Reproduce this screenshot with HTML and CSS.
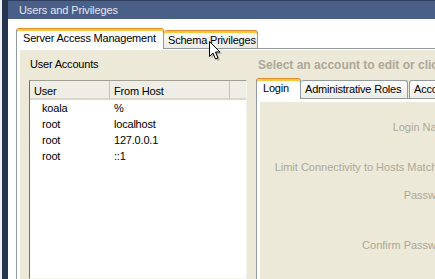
FILE: index.html
```html
<!DOCTYPE html>
<html>
<head>
<meta charset="utf-8">
<link rel="stylesheet" href="styles.css">
</head>
<body>
<div class="window">
  <div class="edge"></div>
  <div class="main">
    <div class="titlebar">Users and Privileges</div>
    <div class="client">
      <div class="tabs">
        <div class="tab active">Server Access Management</div>
        <div class="tab hover">Schema Privileges</div>
      </div>
      <div class="panel">
        <div class="panel-inner">
          <div class="col-left">
            <div class="section-label">User Accounts</div>
            <div class="listview">
              <div class="lv-head">
                <div class="hc c1">User</div>
                <div class="hc c2">From Host</div>
                <div class="hc c3"></div>
              </div>
              <div class="lv-row"><span class="c1">koala</span><span class="c2">%</span></div>
              <div class="lv-row"><span class="c1">root</span><span class="c2">localhost</span></div>
              <div class="lv-row"><span class="c1">root</span><span class="c2">127.0.0.1</span></div>
              <div class="lv-row"><span class="c1">root</span><span class="c2">::1</span></div>
            </div>
          </div>
          <div class="col-right">
            <div class="hint">Select an account to edit or click Add Account to create a new one</div>
            <div class="subtabs">
              <div class="stab active">Login</div>
              <div class="stab">Administrative Roles</div>
              <div class="stab">Account Limits</div>
            </div>
            <div class="subpanel">
              <div class="form">
                <div class="field f1"><span class="lbl">Login Name:</span></div>
                <div class="field f2"><span class="lbl">Limit Connectivity to Hosts Matching:</span></div>
                <div class="field f3"><span class="lbl">Password:</span></div>
                <div class="field f4"><span class="lbl">Confirm Password:</span></div>
              </div>
            </div>
          </div>
        </div>
      </div>
    </div>
  </div>
</div>
<svg class="cursor" width="14" height="22" viewBox="0 0 14 22">
  <path d="M2.5 2.5 L2.5 17.5 L6 14 L8.5 20 L11 19 L8.5 13 L13 13 Z" fill="#000" opacity="0.25"/>
  <path d="M0.5 0.5 L0.5 15.5 L4 12 L6.5 18 L9 17 L6.5 11 L11 11 Z" fill="#fff" stroke="#000" stroke-width="1" stroke-linejoin="miter"/>
</svg>
</body>
</html>
```
FILE: styles.css
```css
html, body {
  margin: 0;
  padding: 0;
}
body {
  width: 435px;
  height: 279px;
  overflow: hidden;
  background: #fff;
  font-family: "Liberation Sans", Arial, sans-serif;
  font-size: 11px;
  letter-spacing: -0.2px;
  color: #000;
}
.window {
  display: flex;
  width: 435px;
  height: 279px;
}
.edge {
  flex: none;
  width: 8px;
  background: linear-gradient(to right, #efeff4 0, #efeff4 2px, #25354f 2px);
}
.main {
  flex: 1;
  min-width: 0;
  display: flex;
  flex-direction: column;
}
.titlebar {
  flex: none;
  box-sizing: border-box;
  height: 19px;
  border-top: 1px solid #2f3f60;
  background: #4a5f87;
  color: #e4e8f0;
  padding-left: 11px;
  line-height: 18px;
  font-size: 11px;
  letter-spacing: -0.1px;
}
.client {
  flex: 1;
  display: flex;
  flex-direction: column;
  background: #fff;
  padding: 9px 0 0 8px;
  min-height: 0;
}
.tabs {
  display: flex;
  align-items: flex-end;
  height: 20px;
  position: relative;
  z-index: 1;
}
.tab {
  box-sizing: border-box;
  white-space: nowrap;
  line-height: 14px;
  border-radius: 3px 3px 0 0;
}
.tab.active {
  width: 148px;
  height: 21px;
  margin-bottom: -1px;
  background: #fff;
  border: 1px solid #919b9c;
  border-bottom: none;
  border-top: 1px solid #e68b2c;
  box-shadow: inset 0 2px 0 #ffc83c;
  padding: 2px 0 0 6px;
}
.tab.hover {
  width: 94px;
  height: 18px;
  background: linear-gradient(#fefefe, #ecebe6);
  border: 1px solid #919b9c;
  border-left: none;
  border-bottom: none;
  border-top: 1px solid #e68b2c;
  box-shadow: inset 0 2px 0 #ffc83c;
  padding: 2px 0 0 4px;
}
.panel {
  flex: 1;
  display: flex;
  min-height: 0;
  border-top: 1px solid #919b9c;
  border-left: 1px solid #919b9c;
  padding: 1px 0 0 3px;
  background: #fff;
}
.panel-inner {
  flex: 1;
  min-width: 0;
  background: #ece9d8;
  display: grid;
  grid-template-columns: 218px 1fr;
  column-gap: 9px;
  padding-left: 9px;
}
.col-left {
  display: flex;
  flex-direction: column;
  min-height: 0;
}
.section-label {
  padding: 7px 0 0 1px;
  line-height: 14px;
}
.listview {
  flex: 1;
  margin-top: 9px;
  background: #fff;
  border: 1px solid;
  border-color: #a29f92 #f4f3ee #f4f3ee #716f64;
}
.lv-head {
  display: flex;
  height: 19px;
  box-sizing: border-box;
  background: #efeee6;
  border-bottom: 2px solid #dcd8c8;
}
.hc {
  box-sizing: border-box;
  padding-top: 3px;
  line-height: 14px;
  white-space: nowrap;
}
.hc.c1 {
  width: 79px;
  padding-left: 4px;
}
.hc.c2 {
  width: 120px;
  padding-left: 4px;
  border-left: 1px solid #c7c5b2;
}
.hc.c3 {
  flex: 1;
  border-left: 1px solid #c7c5b2;
}
.lv-row {
  display: flex;
  height: 16px;
  line-height: 16px;
  white-space: nowrap;
}
.lv-row .c1 {
  width: 79px;
  box-sizing: border-box;
  padding-left: 12px;
}
.lv-row .c2 {
  padding-left: 5px;
}
.col-right {
  min-width: 0;
  display: flex;
  flex-direction: column;
}
.hint {
  padding: 8px 0 0 2px;
  line-height: 14px;
  font-size: 12px;
  font-weight: bold;
  letter-spacing: 0;
  color: #aca899;
  white-space: nowrap;
}
.subtabs {
  display: flex;
  align-items: flex-end;
  margin-top: 6px;
  height: 20px;
  position: relative;
  z-index: 1;
}
.stab {
  box-sizing: border-box;
  white-space: nowrap;
  line-height: 14px;
  border-radius: 3px 3px 0 0;
  flex: none;
}
.stab.active {
  width: 45px;
  height: 21px;
  margin-bottom: -1px;
  background: #fff;
  border: 1px solid #919b9c;
  border-bottom: none;
  border-top: 1px solid #e68b2c;
  box-shadow: inset 0 2px 0 #ffc83c;
  padding: 2px 0 0 6px;
}
.stab:not(.active) {
  height: 18px;
  background: linear-gradient(#fefefe, #ecebe6);
  border: 1px solid #919b9c;
  border-bottom: none;
  padding: 1px 0 0 4px;
}
.stab:nth-child(2) {
  width: 107px;
  border-left: none;
}
.stab:nth-child(3) {
  width: 90px;
  margin-left: 1px;
}
.subpanel {
  flex: 1;
  display: flex;
  border-top: 1px solid #919b9c;
  border-left: 1px solid #919b9c;
  padding: 3px 0 0 3px;
  background: #fff;
}
.form {
  flex: 1;
  background: #ece9d8;
  padding-top: 18px;
  display: flex;
  flex-direction: column;
}
.field {
  width: 195px;
  text-align: right;
  line-height: 14px;
  color: #aca899;
  letter-spacing: 0;
  white-space: nowrap;
}
.f2 { margin-top: 26px; }
.f3 { margin-top: 14px; }
.f4 { margin-top: 36px; }
.cursor {
  position: absolute;
  left: 209px;
  top: 41px;
  z-index: 5;
}
```
